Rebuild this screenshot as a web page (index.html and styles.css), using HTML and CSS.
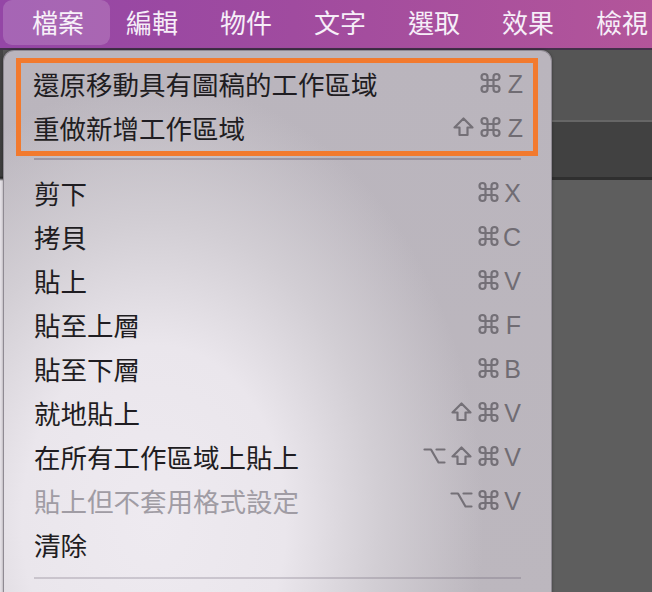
FILE: index.html
```html
<!DOCTYPE html>
<html lang="zh-Hant">
<head>
<meta charset="utf-8">
<title>編輯選單</title>
<link rel="stylesheet" href="styles.css">
</head>
<body>
<svg width="0" height="0" style="position:absolute">
  <defs>
    <symbol id="cmd" viewBox="0 0 24 24"><path d="M15 6v12a3 3 0 1 0 3-3H6a3 3 0 1 0 3 3V6a3 3 0 1 0-3 3h12a3 3 0 1 0-3-3"/></symbol>
    <symbol id="shift" viewBox="0 0 24 24"><path d="M12 3.5 21 12.5h-5v7.5H8v-7.5H3z"/></symbol>
    <symbol id="opt" viewBox="0 0 24 24"><path d="M2 5.5h6.5l7.5 13h6M14 5.5h8"/></symbol>
  </defs>
</svg>
<header class="menubar">
  <span class="mb-item active">檔案</span>
  <span class="mb-item">編輯</span>
  <span class="mb-item">物件</span>
  <span class="mb-item">文字</span>
  <span class="mb-item">選取</span>
  <span class="mb-item">效果</span>
  <span class="mb-item">檢視</span>
</header>
<main class="workspace">
  <div class="left-strip"></div>
  <div class="canvas"></div>
  <nav class="menu">
    <div class="highlight-box">
      <div class="row"><span class="label">還原移動具有圖稿的工作區域</span><span class="keys"><svg class="mod"><use href="#cmd"/></svg><span class="key">Z</span></span></div>
      <div class="row"><span class="label">重做新增工作區域</span><span class="keys"><svg class="mod"><use href="#shift"/></svg><svg class="mod"><use href="#cmd"/></svg><span class="key">Z</span></span></div>
    </div>
    <div class="sep sep-top"></div>
    <div class="row"><span class="label">剪下</span><span class="keys"><svg class="mod"><use href="#cmd"/></svg><span class="key">X</span></span></div>
    <div class="row"><span class="label">拷貝</span><span class="keys"><svg class="mod"><use href="#cmd"/></svg><span class="key">C</span></span></div>
    <div class="row"><span class="label">貼上</span><span class="keys"><svg class="mod"><use href="#cmd"/></svg><span class="key">V</span></span></div>
    <div class="row"><span class="label">貼至上層</span><span class="keys"><svg class="mod"><use href="#cmd"/></svg><span class="key">F</span></span></div>
    <div class="row"><span class="label">貼至下層</span><span class="keys"><svg class="mod"><use href="#cmd"/></svg><span class="key">B</span></span></div>
    <div class="row"><span class="label">就地貼上</span><span class="keys"><svg class="mod"><use href="#shift"/></svg><svg class="mod"><use href="#cmd"/></svg><span class="key">V</span></span></div>
    <div class="row"><span class="label">在所有工作區域上貼上</span><span class="keys"><svg class="mod"><use href="#opt"/></svg><svg class="mod"><use href="#shift"/></svg><svg class="mod"><use href="#cmd"/></svg><span class="key">V</span></span></div>
    <div class="row disabled"><span class="label">貼上但不套用格式設定</span><span class="keys"><svg class="mod"><use href="#opt"/></svg><svg class="mod"><use href="#cmd"/></svg><span class="key">V</span></span></div>
    <div class="row"><span class="label">清除</span></div>
    <div class="sep sep-bottom"></div>
  </nav>
</main>
</body>
</html>
```
FILE: styles.css
```css
* { box-sizing: border-box; }

html, body {
  margin: 0;
  padding: 0;
}

body {
  width: 652px;
  height: 592px;
  overflow: hidden;
  background: #5e5e5e;
  font-family: "Noto Sans CJK TC", "Noto Sans", sans-serif;
}

.menubar {
  display: flex;
  align-items: flex-start;
  height: 50px;
  padding-left: 11px;
  background: linear-gradient(90deg, #9446a6 0%, #a04b9f 45%, #b3559a 100%);
  border-bottom: 2px solid #43304a;
}

.mb-item {
  position: relative;
  padding: 0 21px;
  line-height: 43px;
  font-size: 26px;
  color: #f6eef8;
  white-space: nowrap;
}

.mb-item.active::before {
  content: "";
  position: absolute;
  left: -8px;
  right: -5px;
  top: 0;
  bottom: -2px;
  border-radius: 9px;
  background: rgba(255, 255, 255, 0.17);
}

.workspace {
  position: relative;
  display: flex;
  height: 542px;
}

.left-strip {
  width: 3px;
  background: linear-gradient(180deg, #444 0px, #3d3d3d 126px, #222 128px, #e6e2e8 131px, #e6e2e8 100%);
}

.canvas {
  flex: 1;
  background: linear-gradient(180deg,
    #555555 0px, #555555 70px,
    #666666 70px, #666666 72px,
    #414141 72px, #414141 127px,
    #2f2f2f 127px, #2f2f2f 130px,
    #5e5e5e 130px, #5e5e5e 100%);
}

.menu {
  position: absolute;
  left: 3px;
  top: 0;
  width: 549px;
  height: 560px;
  padding: 7px 13px 0 13px;
  border-radius: 11px 11px 0 0;
  border: 1px solid #8f8a93;
  border-bottom: none;
  background:
    radial-gradient(ellipse 330px 440px at 150px 470px,
      #eeeaf0 0%, #eae6ec 40%, #d2ced4 68%, rgba(188, 183, 190, 0) 100%),
    linear-gradient(180deg, #bab5bd 0%, #bcb7be 100%);
  box-shadow: 0 0 3px rgba(0, 0, 0, 0.35);
}

.highlight-box {
  border: 5px solid #f27a2e;
  margin-left: -1px;
}

.row {
  display: flex;
  align-items: center;
  justify-content: space-between;
  height: 44px;
  padding: 0 17px 4px 17px;
  font-size: 26.5px;
  color: #1f1d22;
  white-space: nowrap;
}

.highlight-box .row {
  padding: 0 10px 4px 12px;
}

.row.disabled .label {
  color: #a09ca4;
}

.keys {
  display: flex;
  align-items: center;
  color: #706c73;
}

.mod {
  width: 27px;
  height: 24px;
  fill: none;
  stroke: #747077;
  stroke-width: 2.2;
  stroke-linejoin: round;
  stroke-linecap: round;
  overflow: visible;
}

.key {
  display: flex;
  justify-content: flex-end;
  width: 16px;
  margin-left: 3px;
  font-family: "Liberation Sans", Arial, sans-serif;
  font-size: 25px;
  line-height: 30px;
  padding-top: 2px;
}

.sep {
  height: 2px;
  margin-left: 17px;
  margin-right: 17px;
  background: rgba(70, 60, 80, 0.2);
}

.sep-top {
  margin-top: 2px;
  margin-bottom: 12px;
  background: rgba(90, 80, 100, 0.35);
}

.sep-bottom {
  margin-top: 9px;
}
```
